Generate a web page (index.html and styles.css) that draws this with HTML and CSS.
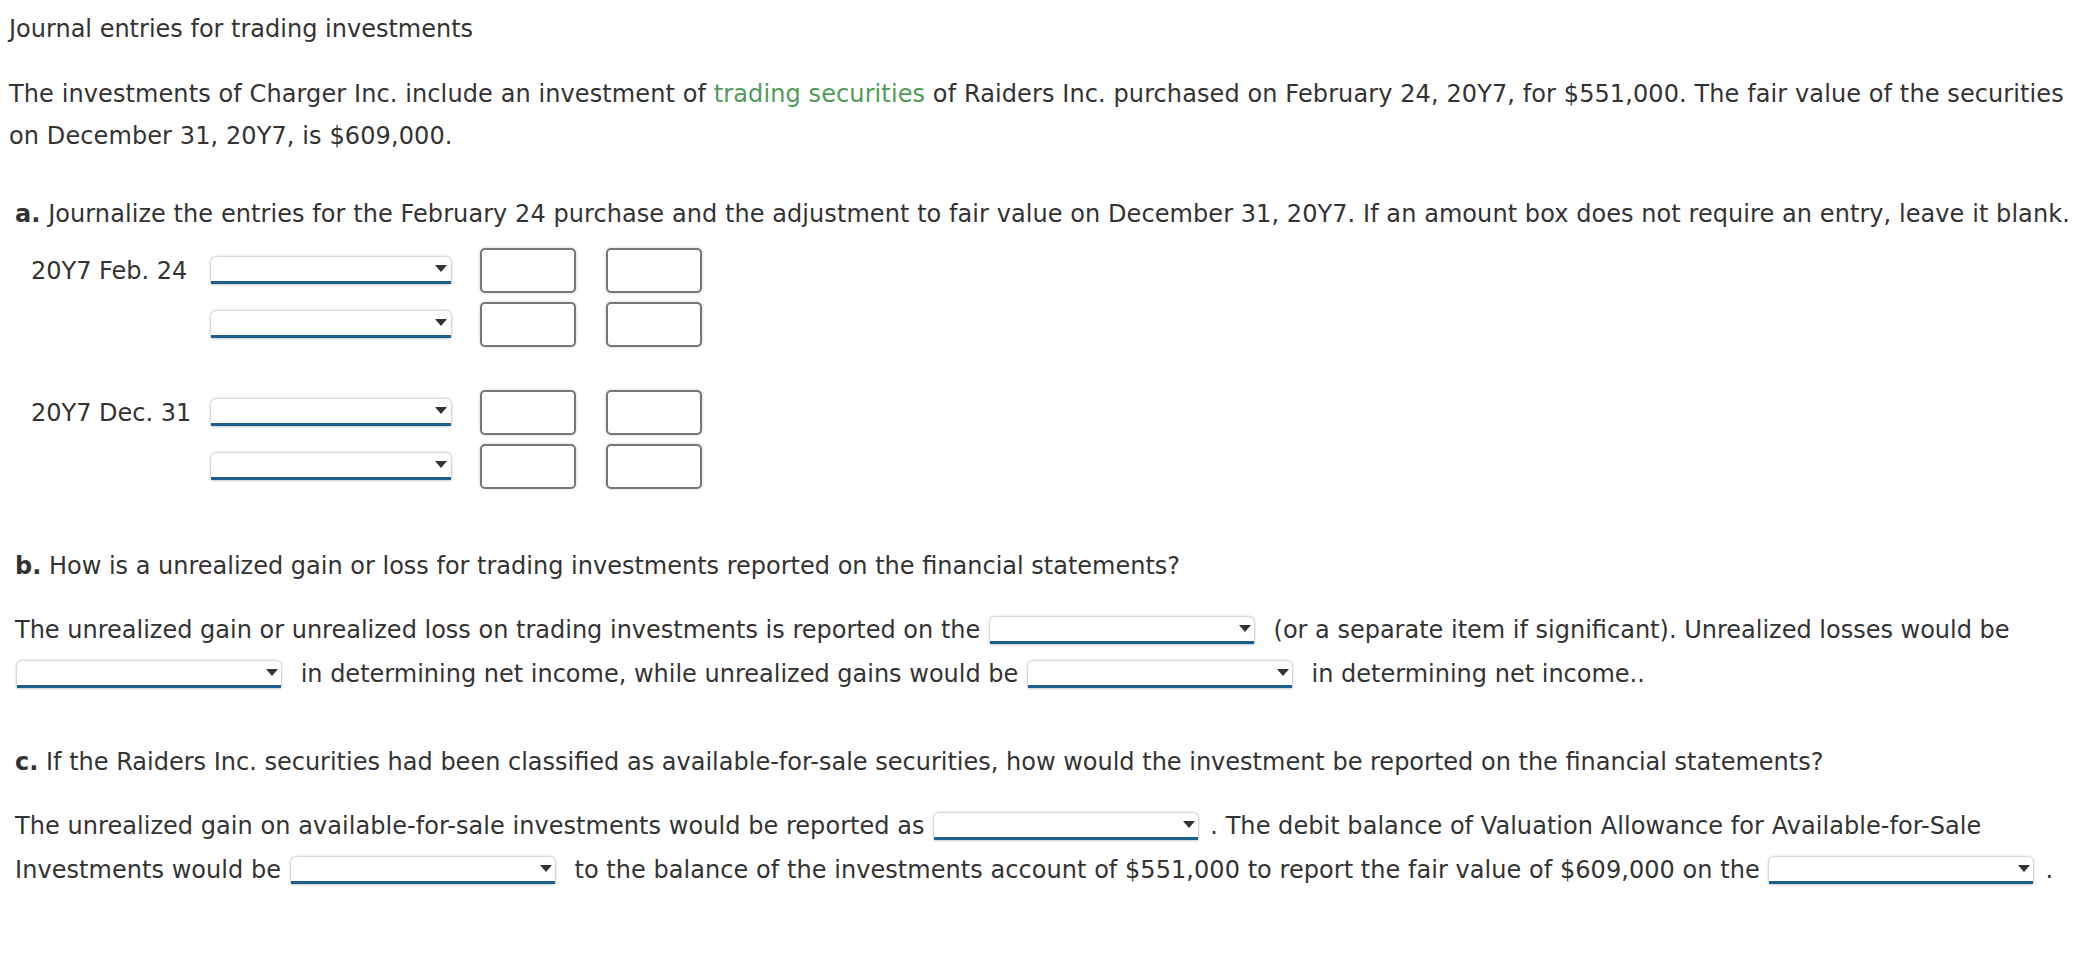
FILE: index.html
```html
<!DOCTYPE html>
<html lang="en">
<head>
<meta charset="utf-8">
<title>Journal entries for trading investments</title>
<link rel="stylesheet" href="styles.css">
</head>
<body>
<div class="page">
  <div class="title">Journal entries for trading investments</div>
  <p class="intro">The investments of Charger Inc. include an investment of <span class="term">trading securities</span> of Raiders Inc. purchased on February 24, 20Y7, for $551,000. The fair value of the securities on December 31, 20Y7, is $609,000.</p>

  <div class="question">
    <p class="prompt prompt-a"><b>a.</b> Journalize the entries for the February 24 purchase and the adjustment to fair value on December 31, 20Y7. If an amount box does not require an entry, leave it blank.</p>

    <div class="journal">
      <div class="entry">
        <div class="date">20Y7 Feb. 24</div>
        <span class="dd dd-acct"><select><option></option></select></span>
        <input class="amt" type="text">
        <input class="amt" type="text">
        <div class="date"></div>
        <span class="dd dd-acct"><select><option></option></select></span>
        <input class="amt" type="text">
        <input class="amt" type="text">
      </div>
      <div class="entry">
        <div class="date">20Y7 Dec. 31</div>
        <span class="dd dd-acct"><select><option></option></select></span>
        <input class="amt" type="text">
        <input class="amt" type="text">
        <div class="date"></div>
        <span class="dd dd-acct"><select><option></option></select></span>
        <input class="amt" type="text">
        <input class="amt" type="text">
      </div>
    </div>

    <p class="prompt prompt-b"><b>b.</b> How is a unrealized gain or loss for trading investments reported on the financial statements?</p>
    <p class="answer">The unrealized gain or unrealized loss on trading investments is reported on the <span class="dd"><select><option></option></select></span> (or a separate item if significant). Unrealized losses would be <span class="dd"><select><option></option></select></span> in determining net income, while unrealized gains would be <span class="dd"><select><option></option></select></span> in determining net income..</p>

    <p class="prompt prompt-c"><b>c.</b> If the Raiders Inc. securities had been classified as available-for-sale securities, how would the investment be reported on the financial statements?</p>
    <p class="answer answer-c">The unrealized gain on available-for-sale investments would be reported as <span class="dd"><select><option></option></select></span>. The debit balance of Valuation Allowance for Available-for-Sale Investments would be <span class="dd"><select><option></option></select></span> to the balance of the investments account of $551,000 to report the fair value of $609,000 on the <span class="dd"><select><option></option></select></span>.</p>
  </div>
</div>
</body>
</html>
```

FILE: styles.css
```css
html, body {
  margin: 0;
  padding: 0;
  background: #ffffff;
}

body {
  font-family: "DejaVu Sans", Verdana, sans-serif;
  font-size: 24px;
  color: #333333;
}

.page {
  padding: 8px 0 0 9px;
}

.title {
  line-height: 42px;
}

p {
  margin: 0;
}

.intro {
  margin-top: 23px;
  line-height: 42px;
  letter-spacing: 0.1px;
}

.term {
  color: #4f9b5a;
}

.question {
  padding-left: 6px;
}

.prompt {
  line-height: 42px;
}

.prompt b {
  font-weight: bold;
}

.prompt-a {
  margin-top: 36px;
  letter-spacing: 0.07px;
  white-space: nowrap;
}

.prompt-b {
  margin-top: 56px;
}

.prompt-c {
  margin-top: 45px;
}

.answer {
  margin-top: 21px;
  line-height: 44px;
}

.answer-c {
  letter-spacing: 0.05px;
}

/* journal entry grid */
.journal {
  margin-top: 13px;
  padding-left: 16px;
}

.entry {
  display: grid;
  grid-template-columns: 150px 239px 96px 96px;
  grid-auto-rows: 45px;
  column-gap: 30px;
  row-gap: 9px;
  align-items: center;
}

.entry + .entry {
  margin-top: 43px;
}

.date {
  line-height: 28px;
  white-space: nowrap;
}

/* dropdowns */
.dd {
  display: inline-block;
  position: relative;
  vertical-align: middle;
  margin: 0 12px 2px 2px;
}

.dd select {
  display: block;
  width: 264px;
  height: 27px;
  margin: 0;
  padding: 0 20px 0 6px;
  box-sizing: border-box;
  -webkit-appearance: none;
  appearance: none;
  background: #ffffff;
  border: none;
  border-bottom: 3px solid #1c5f8d;
  border-radius: 5px 5px 0 0;
  box-shadow: 0 0 3px rgba(0, 0, 0, 0.42);
  font-family: "DejaVu Sans", Verdana, sans-serif;
  font-size: 20px;
  color: #333333;
  outline: none;
}

.dd::after {
  content: "";
  position: absolute;
  right: 3px;
  top: 8px;
  width: 0;
  height: 0;
  border-left: 6px solid transparent;
  border-right: 6px solid transparent;
  border-top: 7px solid #333333;
  pointer-events: none;
}

.dd-acct {
  margin: 0;
  display: block;
}

.dd-acct select {
  width: 240px;
}

/* amount boxes */
.amt {
  display: block;
  width: 96px;
  height: 45px;
  margin: 0;
  padding: 0 6px;
  box-sizing: border-box;
  border: 2px solid #777777;
  border-radius: 5px;
  box-shadow: 0 0 3px rgba(0, 0, 0, 0.22);
  background: #ffffff;
  font-family: "DejaVu Sans", Verdana, sans-serif;
  font-size: 20px;
  color: #333333;
  outline: none;
}
```
